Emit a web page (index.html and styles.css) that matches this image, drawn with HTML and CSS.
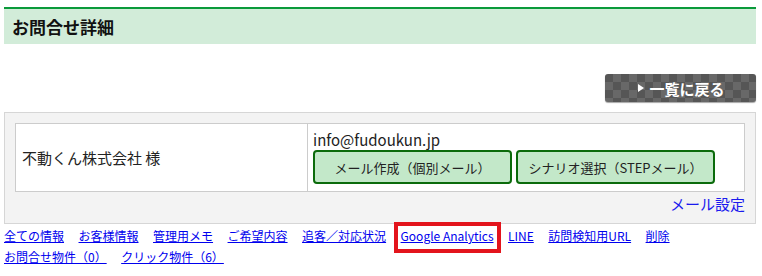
FILE: index.html
```html
<!DOCTYPE html>
<html lang="ja">
<head>
<meta charset="utf-8">
<link rel="stylesheet" href="styles.css">
</head>
<body>
<div class="page">
  <h1 class="title">お問合せ詳細</h1>
  <div class="toolbar">
    <a class="back-btn" href="#"><span class="tri"></span>一覧に戻る</a>
  </div>
  <div class="panel">
    <table class="info">
      <tr>
        <td class="name">不動くん株式会社 様</td>
        <td class="contact">
          <div class="email">info@fudoukun.jp</div>
          <div class="btns">
            <button class="gbtn">メール作成（個別メール）</button>
            <button class="gbtn">シナリオ選択（STEPメール）</button>
          </div>
        </td>
      </tr>
    </table>
    <div class="mail-set"><a href="#">メール設定</a></div>
  </div>
  <nav class="links">
    <a href="#">全ての情報</a>
    <a href="#">お客様情報</a>
    <a href="#">管理用メモ</a>
    <a href="#">ご希望内容</a>
    <a href="#">追客／対応状況</a>
    <a href="#" class="hl">Google Analytics</a>
    <a href="#">LINE</a>
    <a href="#">訪問検知用URL</a>
    <a href="#">削除</a>
    <a href="#">お問合せ物件（0）</a>
    <a href="#">クリック物件（6）</a>
  </nav>
</div>
</body>
</html>
```

FILE: styles.css
```css
* { box-sizing: border-box; }
body {
  margin: 0;
  background: #fff;
  font-family: "Noto Sans CJK JP", "Noto Sans", sans-serif;
  color: #222;
}
.page {
  padding: 7px 6px 0 4px;
}
.title {
  margin: 0;
  height: 37px;
  border-top: 2px solid #0a9a3a;
  background: #d2ecd9;
  padding-left: 8px;
  display: flex;
  align-items: center;
  font-size: 17px;
  font-weight: bold;
  color: #111;
}
.toolbar {
  display: flex;
  justify-content: flex-end;
  margin-top: 30px;
}
.back-btn {
  width: 151px;
  height: 28px;
  border-radius: 3px;
  display: flex;
  align-items: center;
  justify-content: center;
  gap: 5px;
  color: #fff;
  text-decoration: none;
  font-size: 15px;
  font-weight: bold;
  background-color: #5c5c5c;
  background-image: conic-gradient(#686868 25%, #565656 0 50%, #686868 0 75%, #565656 0);
  background-size: 16px 16px;
  box-shadow: 0 1px 1px rgba(0,0,0,0.35);
  padding-left: 2px;
}
.tri {
  width: 0;
  height: 0;
  border-left: 6px solid #fff;
  border-top: 4px solid transparent;
  border-bottom: 4px solid transparent;
}
.panel {
  margin-top: 10px;
  border: 1px solid #d6d6d6;
  background: #f3f3f3;
  padding: 10px 10px 8px 10px;
}
.info {
  width: 100%;
  border-collapse: collapse;
  background: #fff;
}
.info td {
  border: 1px solid #cccccc;
  vertical-align: middle;
}
.name {
  width: 292px;
  padding: 0 6px;
  font-size: 15px;
  color: #222;
}
.contact {
  padding: 6px 5px 7px 5px;
}
.email {
  font-size: 15px;
  line-height: 20px;
  color: #222;
}
.btns {
  display: flex;
  gap: 4px;
}
.gbtn {
  width: 199px;
  height: 34px;
  border: 2px solid #0b6b0b;
  border-radius: 4px;
  background: #c3e8c9;
  font-family: "Noto Sans CJK JP", "Noto Sans", sans-serif;
  font-size: 13px;
  color: #222;
  padding: 0;
}
.mail-set {
  text-align: right;
  line-height: 22px;
  margin-top: 1px;
  font-size: 15px;
}
.mail-set a {
  color: #1a1aee;
  text-decoration: none;
}
.links {
  display: flex;
  flex-wrap: wrap;
  column-gap: 14.5px;
  padding-top: 1px;
  font-size: 12px;
  line-height: 21px;
}
.links a {
  color: #0000ee;
  text-decoration: underline;
}
.hl {
  position: relative;
}
.hl::after {
  content: "";
  position: absolute;
  left: -7px;
  right: -7px;
  top: -3px;
  bottom: -7px;
  border: 4px solid #e3141c;
}
```
